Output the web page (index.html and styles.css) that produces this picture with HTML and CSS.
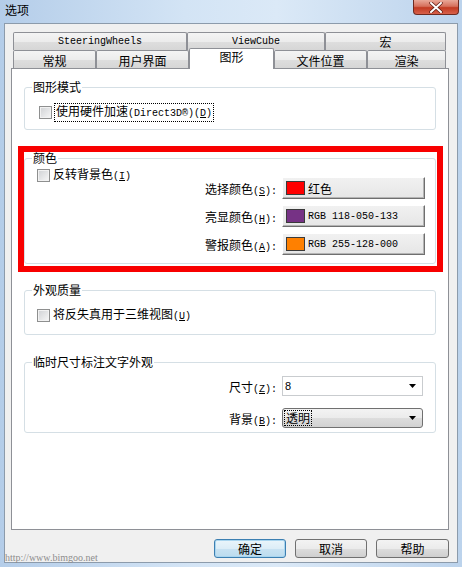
FILE: index.html
```html
<!DOCTYPE html>
<html lang="zh-CN">
<head>
    <meta charset="UTF-8">
    <title>选项</title>
    <link rel="stylesheet" href="styles.css">
</head>
<body>
    <div class="window">
        <div class="titlebar">
            <span class="title">选项</span>
            <span class="close">
                <svg width="14" height="11" viewBox="0 0 14 11">
                    <path d="M2 1 L12 10 M12 1 L2 10" stroke="#5a1a12" stroke-width="3.4" stroke-linecap="round"/>
                    <path d="M2 1 L12 10 M12 1 L2 10" stroke="#ffffff" stroke-width="2" stroke-linecap="round"/>
                </svg>
            </span>
        </div>

        <div class="dialog">
            <div class="tabs">
                <div class="tab-row">
                    <div class="tab mono tab-sw">SteeringWheels</div>
                    <div class="tab mono tab-vc">ViewCube</div>
                    <div class="tab tab-macro">宏</div>
                </div>
                <div class="tab-row front">
                    <div class="tab tab-general">常规</div>
                    <div class="tab tab-ui">用户界面</div>
                    <div class="tab tab-graphics active">图形</div>
                    <div class="tab tab-files">文件位置</div>
                    <div class="tab tab-render">渲染</div>
                </div>
            </div>

            <div class="panel">
                <fieldset class="group group-mode">
                    <legend>图形模式</legend>
                    <div class="check-row">
                        <span class="check"></span>
                        <span class="focus">使用硬件加速<span class="mono">(Direct3D®)(<u>D</u>)</span></span>
                    </div>
                </fieldset>

                <div class="highlight">
                    <fieldset class="group group-color">
                        <legend>颜色</legend>
                        <div class="color-body">
                            <div class="check-row">
                                <span class="check"></span>
                                <span>反转背景色<span class="mono">(<u>I</u>)</span></span>
                            </div>
                            <div class="field-grid color-grid">
                                <span class="field-label">选择颜色<span class="mono">(<u>S</u>):</span></span>
                                <span class="color-btn"><span class="swatch swatch-red"></span>红色</span>
                                <span class="field-label">亮显颜色<span class="mono">(<u>H</u>):</span></span>
                                <span class="color-btn"><span class="swatch swatch-purple"></span><span class="mono">RGB 118-050-133</span></span>
                                <span class="field-label">警报颜色<span class="mono">(<u>A</u>):</span></span>
                                <span class="color-btn"><span class="swatch swatch-orange"></span><span class="mono">RGB 255-128-000</span></span>
                            </div>
                        </div>
                    </fieldset>
                </div>

                <fieldset class="group group-quality">
                    <legend>外观质量</legend>
                    <div class="check-row">
                        <span class="check"></span>
                        <span>将反失真用于三维视图<span class="mono">(<u>U</u>)</span></span>
                    </div>
                </fieldset>

                <fieldset class="group group-dim">
                    <legend>临时尺寸标注文字外观</legend>
                    <div class="field-grid dim-grid">
                        <span class="field-label">尺寸<span class="mono">(<u>Z</u>):</span></span>
                        <span class="combo edit">
                            <span class="combo-text sans">8</span>
                            <svg class="arrow" width="7" height="4" viewBox="0 0 7 4"><path d="M0 0 H7 L3.5 4 Z" fill="#000"/></svg>
                        </span>
                        <span class="field-label">背景<span class="mono">(<u>B</u>):</span></span>
                        <span class="combo list">
                            <span class="combo-text focus">透明</span>
                            <svg class="arrow" width="7" height="4" viewBox="0 0 7 4"><path d="M0 0 H7 L3.5 4 Z" fill="#000"/></svg>
                        </span>
                    </div>
                </fieldset>
            </div>

            <div class="footer">
                <span class="watermark">http://www.bimgoo.net</span>
                <button class="btn default">确定</button>
                <button class="btn">取消</button>
                <button class="btn btn-help">帮助</button>
            </div>
        </div>
    </div>
</body>
</html>
```

FILE: styles.css
```css
* {
    box-sizing: border-box;
}
body {
    margin: 0;
    font-family: "Noto Sans CJK SC", "DejaVu Sans", sans-serif;
    font-size: 12px;
    color: #000;
}
.mono {
    font-family: "Liberation Mono", "DejaVu Sans Mono", monospace;
    font-size: 10px;
}
.sans {
    font-family: "Liberation Sans", Arial, sans-serif;
    font-size: 11px;
}
.window {
    width: 462px;
    height: 567px;
    padding: 0 4px 4px;
    background: linear-gradient(to right, #b4cde9, #d3e4f5 40%, #dbe9f7 60%, #bcd3ec);
}
.titlebar {
    height: 23px;
    display: flex;
    justify-content: space-between;
    align-items: flex-start;
}
.title {
    padding: 2px 0 0 1px;
    font-size: 12px;
    line-height: 16px;
}
.close {
    width: 46px;
    height: 15px;
    margin-right: -1px;
    display: flex;
    align-items: center;
    justify-content: center;
    border: 1px solid #6e2a20;
    border-top: 0;
    border-radius: 0 0 4px 4px;
    background: linear-gradient(#e9a898, #d6705c 45%, #c23a22 55%, #d8614a);
}
.dialog {
    height: 540px;
    padding: 8px 8px 0 6px;
    background: #f0f0f0;
    border: 1px solid #8c9bab;
}

/* tabs */
.tabs {
    margin: 0 3px 0 2px;
}
.tab-row {
    display: flex;
    height: 18px;
}
.tab {
    height: 18px;
    line-height: 17px;
    text-align: center;
    border: 1px solid #8e9096;
    border-bottom: 0;
    border-radius: 2px 2px 0 0;
    background: linear-gradient(#f4f4f4, #ececec 50%, #dedede 51%, #d6d6d6);
}
.tab-row.front .tab {
    line-height: 19px;
}
.tab-sw { width: 174px; }
.tab-vc { width: 138px; }
.tab-macro { width: 121px; }
.tab-general { width: 83px; }
.tab-ui { width: 93px; }
.tab-graphics { width: 85px; }
.tab-files { width: 93px; }
.tab-render { width: 79px; }
.tab-row.front .tab.active {
    height: 21px;
    margin-top: -2px;
    margin-bottom: -1px;
    line-height: 15px;
    background: #fff;
    position: relative;
    z-index: 1;
}

/* panel */
.panel {
    width: 438px;
    height: 462px;
    padding: 12px 12px 0 12px;
    background: #fff;
    border: 1px solid #8e9096;
}
.group {
    margin: 0;
    min-width: 0;
    padding: 0 0 0 12px;
    border: 1px solid #d5dfe5;
    border-radius: 3px;
}
.group legend {
    margin-left: -5px;
    padding: 0 1px;
    line-height: 12px;
}
.group-mode {
    padding-top: 12px;
    padding-bottom: 10px;
}
.group-mode .check-row {
    margin-left: 2px;
}
.highlight {
    margin: 16px -7px 0 -6px;
    padding: 0 1px 2px 0;
    border: 6px solid #f80000;
}
.group-color {
    padding-top: 4px;
    padding-bottom: 8px;
}
.group-quality {
    margin-top: 12px;
    padding-top: 12px;
    padding-bottom: 12px;
}
.group-dim {
    margin-top: 21px;
    padding-top: 8px;
    padding-bottom: 4px;
}

.check-row {
    display: flex;
    align-items: center;
    gap: 3px;
    height: 14px;
    line-height: 14px;
}
.check {
    width: 13px;
    height: 13px;
    flex: none;
    border: 1px solid #8e8f8f;
    background: linear-gradient(135deg, #cfd1d4, #f7f7f7);
    box-shadow: inset 0 0 0 1px #f2f2f2;
}
.focus {
    outline: 1px dotted #000;
    outline-offset: 0;
    padding: 0 1px;
}

.color-body {
    display: flex;
    align-items: flex-start;
}
.field-grid {
    flex: 1;
    display: grid;
    column-gap: 5px;
    align-items: center;
}
.color-grid {
    margin: 9px 10px 0 0;
    grid-template-columns: 1fr 143px;
    row-gap: 6px;
}
.dim-grid {
    margin-right: 12px;
    grid-template-columns: 1fr 141px;
    row-gap: 12px;
}
.field-label {
    text-align: right;
    white-space: nowrap;
}
.color-btn {
    height: 22px;
    display: flex;
    align-items: center;
    gap: 3px;
    padding-left: 3px;
    border: 1px solid;
    border-color: #ffffff #6f6f6f #6f6f6f #ffffff;
    box-shadow: inset -1px -1px 0 #b4b4b4;
    background: linear-gradient(#f1f1f1, #e6e6e6);
}
.swatch {
    width: 19px;
    height: 14px;
    flex: none;
    border: 1px solid #3a3a3a;
}
.swatch-red { background: #ff0000; }
.swatch-purple { background: rgb(118, 50, 133); }
.swatch-orange { background: rgb(255, 128, 0); }

.combo {
    height: 20px;
    display: flex;
    align-items: center;
    justify-content: space-between;
    padding: 0 6px 0 2px;
}
.combo.edit {
    background: #fff;
    border: 1px solid #c9cccf;
}
.combo.list {
    border: 1px solid #707070;
    border-radius: 3px;
    background: linear-gradient(#f3f3f3, #ebebeb 50%, #dddddd 51%, #d1d1d1);
}
.combo-text {
    line-height: 14px;
}
.arrow {
    flex: none;
}

/* footer */
.footer {
    height: 23px;
    margin-top: 9px;
    display: flex;
    align-items: flex-start;
    gap: 9px;
}
.watermark {
    flex: 1;
    align-self: flex-end;
    margin: 0 0 -2px -6px;
    font-family: "Liberation Serif", serif;
    font-size: 10px;
    line-height: 12px;
    color: #8d8d8d;
}
.btn {
    width: 72px;
    height: 19px;
    padding: 0;
    font-family: inherit;
    font-size: 12px;
    line-height: 15px;
    color: #000;
    border: 1px solid #707070;
    border-radius: 3px;
    background: linear-gradient(#f3f3f3, #ebebeb 50%, #dddddd 51%, #cfcfcf);
}
.btn.default {
    border-color: #3c7fb1;
    background: linear-gradient(#eaf5fb, #dcedf7 50%, #c8e2f2 51%, #bcdcee);
    box-shadow: inset 0 0 0 1px #a9d5ef;
}
.btn-help {
    width: 73px;
}
```
